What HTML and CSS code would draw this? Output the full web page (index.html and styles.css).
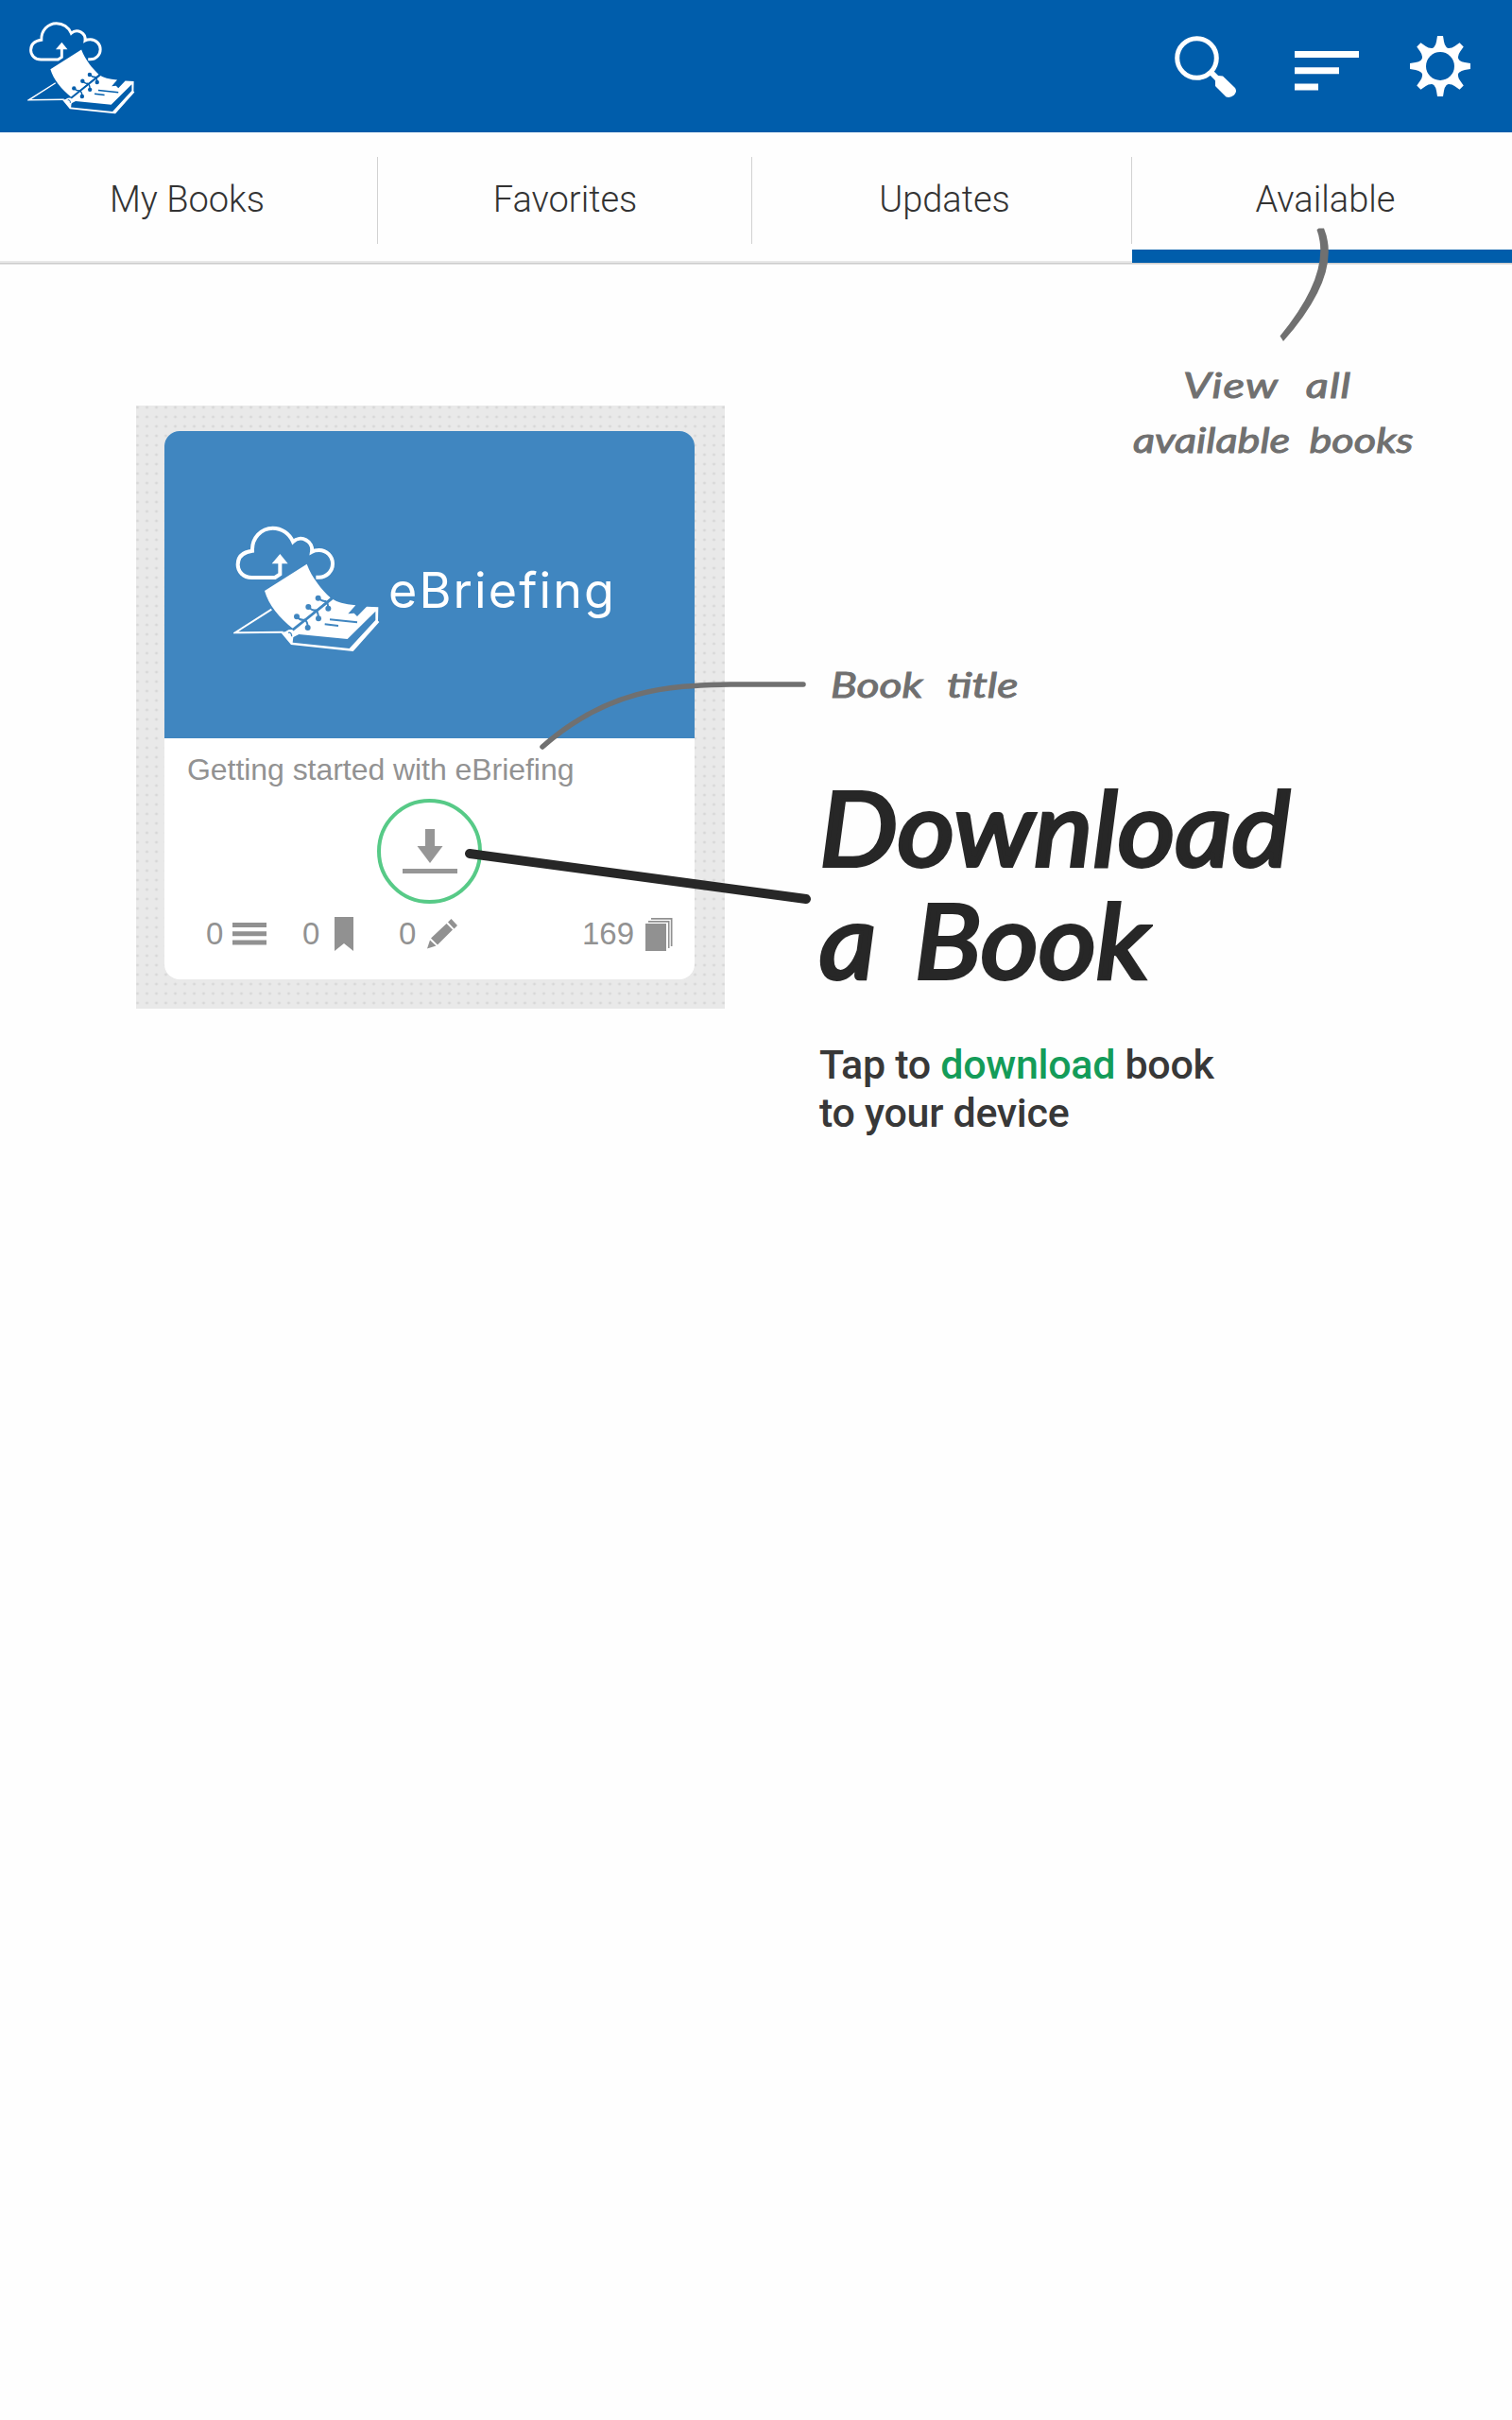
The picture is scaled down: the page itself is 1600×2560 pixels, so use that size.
FILE: index.html
```html
<!DOCTYPE html>
<html lang="en">
<head>
<meta charset="utf-8">
<title>eBriefing</title>
<link rel="stylesheet" href="styles.css">
</head>
<body>
<svg class="defs" aria-hidden="true">
  <symbol id="logo" viewBox="50 45 465 405">
    <path d="M312 212H322A43 43 0 0 0 322 126Q308 126 299 131A36 36 0 0 0 239 99C228 73 203 56 175 56C138 56 108 88 110 128C80 132 64 148 64 172C64 195 82 213 108 213H182L198 202V165" fill="none" stroke="currentColor" stroke-width="12"/>
    <path d="M198 138L223 169H172Z" fill="currentColor"/>
    <path d="M171 314L55 388L208 386" fill="none" stroke="currentColor" stroke-width="6"/>
    <path d="M240 378L362 280Q385 296 438 301L414 328L433 326L443 336L473 305L510 307L509 350L513 354L430 447L233 426L201 388Z" fill="currentColor"/>
    <path d="M501 320V348L418 438L238 419L240 402L258 393L412 408Z" fill="var(--logo-bg)"/>
    <path d="M149 255L283 170C300 215 330 250 358 277L240 376C195 340 162 300 149 255Z" fill="currentColor"/>
    <circle cx="230" cy="392" r="14" fill="currentColor"/>
    <path d="M224 388Q235 385 235 400" fill="none" stroke="var(--logo-bg)" stroke-width="4"/>
    <g fill="none" stroke="var(--logo-bg)" stroke-width="6">
      <path d="M238 379L364 279" stroke-width="8"/>
      <path d="M252 337Q262 350 276 347Q286 352 286 372M289 306Q300 320 311 316Q320 322 320 343M320 278Q332 290 343 288Q351 294 351 311"/>
      <path d="M356 346L443 355M340 361L383 366"/>
    </g>
    <g fill="var(--logo-bg)">
      <circle cx="251" cy="337" r="9"/><circle cx="288" cy="306" r="9"/><circle cx="319" cy="278" r="9"/>
      <circle cx="286" cy="372" r="9"/><circle cx="320" cy="343" r="9"/><circle cx="351" cy="311" r="9"/>
    </g>
  </symbol>
</svg>

<header class="topbar">
  <svg class="brand"><use href="#logo"/></svg>
  <div class="actions">
    <svg width="66" height="66" viewBox="0 0 66 66">
      <circle cx="23.5" cy="23.5" r="20.8" fill="none" stroke="#fff" stroke-width="5"/>
      <path d="M38 38L48 48" stroke="#fff" stroke-width="6"/>
      <path d="M43 48L42.500 44L46 42L51 42.500L64 55Q66.500 59 63 62.500Q59 66 54.500 64.500L43 53Z" fill="#fff"/>
    </svg>
    <svg width="68" height="42" viewBox="0 0 68 42"><path d="M0 0H68V7H0ZM0 17.300H47V24.300H0ZM0 34.600H25V41.600H0Z" fill="#fff"/></svg>
    <svg width="64" height="64" viewBox="-32 -32 64 64">
      <g fill="#fff">
        <g id="teeth"><path id="tooth" d="M-3-32H3L4-26Q5-19 12-17L0-10L-12-17Q-5-19-4-26Z"/>
        <use href="#tooth" transform="rotate(90)"/><use href="#tooth" transform="rotate(180)"/><use href="#tooth" transform="rotate(270)"/></g>
        <use href="#teeth" transform="rotate(45)"/>
      </g>
      <circle r="17.500" fill="none" stroke="#fff" stroke-width="5"/>
      <circle r="15" fill="#005dab"/>
    </svg>
  </div>
</header>

<nav class="tabs">
  <a class="tab mine">My Books</a>
  <a class="tab">Favorites</a>
  <a class="tab updates">Updates</a>
  <a class="tab active">Available</a>
</nav>

<main class="stage">
  <section class="shelf">
    <article class="book">
      <div class="cover">
        <svg class="cover-logo"><use href="#logo"/></svg>
        <span class="wordmark">eBriefing</span>
      </div>
      <h2 class="title">Getting started with eBriefing</h2>
      <div class="download">
        <svg width="58" height="47" viewBox="0 0 58 47"><path d="M24 0H34V18H42.500L29 36L15.500 18H24ZM0 42H58V47.500H0Z" fill="#969696"/></svg>
      </div>
      <div class="stats">
        <span class="stat s1">0<svg width="36" height="24"><path d="M0 0H36V5H0ZM0 9.300H36V14.300H0ZM0 18.600H36V23.600H0Z" fill="#919191"/></svg></span>
        <span class="stat s2">0<svg width="20" height="36"><path d="M0 0H20V36L10 28L0 36Z" fill="#919191"/></svg></span>
        <span class="stat s3">0<svg width="32" height="32"><path d="M0 31.500L3 22.500L9.500 28.500ZM4 20.500L20.500 5L27 11.500L11 27.500ZM22 3.500L25.500 0L32 7L28.500 10.500Z" fill="#919191"/></svg></span>
        <span class="stat pages">169<svg width="29" height="35"><path d="M0 6H22V35H0ZM3 3H25.500V32H24V4.700H3ZM6 0H28.500V30H26.800V1.700H6Z" fill="#919191"/></svg></span>
      </div>
    </article>
  </section>
  <section class="guide">
    <h1 class="hand headline"><span class="w1">Download</span><span class="w2">a Book</span></h1>
    <p class="hint">Tap to <em>download</em> book<br>to your device</p>
  </section>
</main>

<svg class="pointers" width="1600" height="1200" fill="none">
  <path d="M1395.500 241.500H1401Q1421 290 1358 361L1354.500 355.500Q1410 288 1393.500 243Z" fill="#707070"/>
  <path d="M574 790C642 730 705 725 773 724H850" stroke="#707070" stroke-width="5.500" stroke-linecap="round"/>
  <path d="M497 903L853 951" stroke="#272727" stroke-width="10" stroke-linecap="round"/>
</svg>
<p class="hand note note-tab"><span class="n1">View all</span><span class="n2">available books</span></p>
<p class="hand note note-title"><span class="n3">Book title</span></p>
</body>
</html>
```
FILE: styles.css
```css
* { box-sizing: border-box; margin: 0; }
body { position: relative; min-height: 2560px; background: #fefefe; font-family: Roboto, sans-serif; color: #333; }
svg { display: block; flex: none; }
.defs { position: absolute; width: 0; height: 0; }

.topbar { display: flex; justify-content: space-between; height: 140px; background: #005dab; padding: 22px 44px 0 29px; color: #fff; }
.brand { --logo-bg: #005dab; width: 114px; height: 99px; }
.actions { display: flex; align-items: center; height: 96px; }
.actions svg:nth-child(1) { margin-top: 2px; }
.actions svg:nth-child(2) { margin: 10px 54px 0 61px; }

.tabs { display: grid; grid-template-columns: 400px 396px 402px 402px; height: 140px; background: linear-gradient(#e8e8e8 0 2px, #ccc 2px 3px, #e2e2e2 3px) 0 136px / 100% 4px no-repeat; }
.tab { position: relative; height: 136px; padding-top: 49px; text-align: center; font-weight: 300; font-size: 38px; line-height: 44px; }
.tab:not(:last-child)::after { content: ""; position: absolute; right: 0; top: 26px; width: 1px; height: 92px; background: #d2d2d2; }
.mine { padding-right: 4px; }
.updates { padding-left: 5px; }
.tab.active { height: 138px; border-bottom: 14px solid #005dab; padding-left: 7px; }

.stage { display: flex; align-items: flex-start; padding: 149px 0 0 144px; }
.shelf { width: 623px; height: 638px; padding: 27px 32px 31px 30px; background: radial-gradient(circle, #d7d7d7 0 1.2px, transparent 1.8px) -3.500px -3px / 10px 10px #e9e9e9; }
.book { width: 561px; height: 580px; border-radius: 16px; background: #fff; overflow: hidden; }
.cover { --logo-bg: #4086c0; display: flex; height: 325px; padding: 99px 0 0 73px; background: #4086c0; color: #fff; }
.cover-logo { width: 155px; height: 135px; }
.wordmark { margin: 38px 0 0 9px; font: 400 52px/64px Inter, sans-serif; letter-spacing: 2.1px; white-space: nowrap; }
.title { padding: 14px 0 0 24px; font: 400 32px/38px "Liberation Sans", sans-serif; letter-spacing: -0.05px; color: #929292; white-space: nowrap; }
.download { display: flex; justify-content: center; width: 111px; height: 111px; margin: 12px 0 0 225px; padding-top: 28px; border: 4px solid #57ca87; border-radius: 50%; }
.stats { display: flex; height: 44px; margin-top: 10px; padding: 0 23px 0 44px; font: 400 33px/44px "Liberation Sans", sans-serif; color: #929292; }
.stat { display: flex; align-items: center; }
.s1 { width: 102px; gap: 10px; }
.s2 { width: 102px; gap: 16px; }
.s3 { gap: 12px; }
.pages { margin-left: auto; gap: 12px; }

.guide { padding: 386px 0 0 100px; }
.hand { font-family: Lato, sans-serif; font-style: italic; font-weight: 400; white-space: nowrap; }
.hand span { display: block; width: max-content; transform-origin: 0 50%; }
.headline { font-size: 108px; line-height: 119px; color: #272727; -webkit-text-stroke: 4px #272727; }
.w1 { transform: scaleX(1.085); }
.w2 { transform: scaleX(1.09); word-spacing: 12px; }
.hint { margin: 48px 0 0; font-size: 43px; line-height: 51px; font-weight: 500; letter-spacing: -0.3px; color: #383838; }
.hint em { font-style: normal; color: #149c59; }

.pointers { position: absolute; left: 0; top: 0; }
.note { position: absolute; color: #707070; font-size: 37px; line-height: 58px; -webkit-text-stroke: 1px #707070; }
.note-tab { left: 1199px; top: 378px; }
.n1 { margin-left: 53px; transform: scaleX(1.27); word-spacing: 14px; letter-spacing: 0.8px; }
.n2 { transform: scaleX(1.22); word-spacing: 8px; }
.note-title { left: 879px; top: 695px; }
.n3 { transform: scaleX(1.25); word-spacing: 12px; }
```
